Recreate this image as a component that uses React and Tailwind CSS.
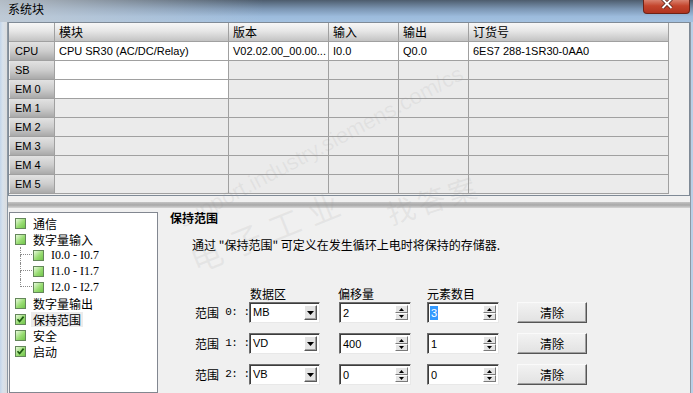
import React from "react";

const cjk = "font-['Noto_Sans_CJK_SC',sans-serif]";
const ui = "font-['Liberation_Sans','Noto_Sans_CJK_SC',sans-serif]";

function TreeBox({ checked }) {
  return (
    <div className="w-[11px] h-[11px] shrink-0 border border-[#64865a] bg-[linear-gradient(135deg,#e8fadc,#98dc72_55%,#72c54c)] flex items-center justify-center">
      {checked && (
        <svg width="9" height="9" viewBox="0 0 9 9">
          <path d="M1.5 4.2 L3.6 6.5 L7.6 1.6" stroke="#1d5a10" strokeWidth="1.7" fill="none" />
        </svg>
      )}
    </div>
  );
}

function TreeItem({ label, checked, selected }) {
  return (
    <div className="h-[16px] flex items-center pl-[5px]">
      <TreeBox checked={checked} />
      <span className={`ml-[5px] px-[2px] text-[12px] leading-[15px] text-black whitespace-nowrap ${cjk} ${selected ? "bg-[#ececec]" : ""}`}>{label}</span>
    </div>
  );
}

function SubItem({ label, last }) {
  return (
    <div className="h-[16px] flex items-center pl-[10px]">
      <div className="w-[12px] h-[16px] flex flex-col shrink-0">
        <div className="h-[8px] border-l border-b border-dotted border-[#8a8a8a]" />
        <div className={`h-[8px] ${last ? "" : "border-l border-dotted border-[#8a8a8a]"}`} />
      </div>
      <div className="ml-[1px]">
        <TreeBox />
      </div>
      <span className="ml-[7px] text-[12px] leading-[15px] text-black whitespace-nowrap font-['Liberation_Serif',serif]">{label}</span>
    </div>
  );
}

function Sunken({ className = "", children }) {
  return (
    <div className={`h-[21px] bg-white border border-t-[#6d6d6d] border-l-[#6d6d6d] border-b-[#e8e8e8] border-r-[#e8e8e8] shadow-[inset_1px_1px_0_#3c3c3c] flex items-center relative ${className}`}>
      {children}
    </div>
  );
}

function Combo({ value }) {
  return (
    <Sunken className="w-[71px] shrink-0">
      <span className={`pl-[3px] text-[11px] text-black ${ui}`}>{value}</span>
      <div className="ml-auto mr-[2px] w-[13px] h-[15px] bg-[#e4e4e4] border border-t-white border-l-white border-b-[#5a5a5a] border-r-[#5a5a5a] shadow-[inset_-1px_-1px_0_#a0a0a0] flex items-center justify-center">
        <svg width="7" height="4" viewBox="0 0 7 4">
          <path d="M0 0 H7 L3.5 4 Z" fill="#000" />
        </svg>
      </div>
    </Sunken>
  );
}

function Spin({ value, selected }) {
  return (
    <Sunken className="w-[72px] shrink-0">
      <span className={`ml-[2px] px-[1px] text-[11px] leading-[14px] ${ui} ${selected ? "bg-[#3399ff] text-white" : "text-black"}`}>{value}</span>
      <div className="ml-auto mr-[2px] w-[13px] h-[15px] flex flex-col">
        <div className="h-[8px] bg-[#e4e4e4] border border-t-white border-l-white border-b-[#7a7a7a] border-r-[#7a7a7a] flex items-center justify-center">
          <svg width="5" height="3" viewBox="0 0 5 3"><path d="M2.5 0 L5 3 H0 Z" fill="#000" /></svg>
        </div>
        <div className="h-[7px] bg-[#e4e4e4] border border-t-white border-l-white border-b-[#7a7a7a] border-r-[#7a7a7a] flex items-center justify-center">
          <svg width="5" height="3" viewBox="0 0 5 3"><path d="M0 0 H5 L2.5 3 Z" fill="#000" /></svg>
        </div>
      </div>
    </Sunken>
  );
}

function ClearBtn() {
  return (
    <div className={`w-[70px] h-[21px] bg-[linear-gradient(to_bottom,#f2f2f2,#e2e2e2)] border border-t-[#fafafa] border-l-[#fafafa] border-b-[#555] border-r-[#555] shadow-[inset_-1px_-1px_0_#a0a0a0] flex items-center justify-center text-[12px] text-black ${cjk}`}>
      清除
    </div>
  );
}

function RangeRow({ idx, area, offset, count, sel }) {
  return (
    <div className="flex items-center ml-[25px] h-[21px]">
      <div className="w-[54px] shrink-0 flex items-center text-black whitespace-nowrap">
        <span className={`text-[12px] ${cjk}`}>范围</span>
        <span className="text-[11px] tracking-[-0.5px] font-['Liberation_Mono',monospace] whitespace-pre"> {idx}: :</span>
      </div>
      <Combo value={area} />
      <div className="ml-[19px]">
        <Spin value={offset} />
      </div>
      <div className="ml-[16px]">
        <Spin value={count} selected={sel} />
      </div>
      <div className="ml-[18px]">
        <ClearBtn />
      </div>
    </div>
  );
}

const headers = ["", "模块", "版本", "输入", "输出", "订货号"];
const rows = [
  { h: "CPU", cells: ["CPU SR30 (AC/DC/Relay)", "V02.02.00_00.00...", "I0.0", "Q0.0", "6ES7 288-1SR30-0AA0"], white: [1, 1, 1, 1, 1] },
  { h: "SB", cells: ["", "", "", "", ""], white: [1, 0, 0, 0, 0] },
  { h: "EM 0", cells: ["", "", "", "", ""], white: [1, 0, 0, 0, 0] },
  { h: "EM 1", cells: ["", "", "", "", ""], white: [0, 0, 0, 0, 0] },
  { h: "EM 2", cells: ["", "", "", "", ""], white: [0, 0, 0, 0, 0] },
  { h: "EM 3", cells: ["", "", "", "", ""], white: [0, 0, 0, 0, 0] },
  { h: "EM 4", cells: ["", "", "", "", ""], white: [0, 0, 0, 0, 0] },
  { h: "EM 5", cells: ["", "", "", "", ""], white: [0, 0, 0, 0, 0] },
];

function Table() {
  return (
    <div className="h-[174px] border border-[#7f8a96] flex bg-[#f0f0f0]">
      <div className="grid grid-cols-[46px_174px_100px_70px_70px_200px] auto-rows-[19px] content-start">
        {headers.map((t, i) => (
          <div
            key={"h" + i}
            className={`border-r border-b border-[#a0a0a0] bg-[linear-gradient(to_bottom,#f7f7f7,#e6e6e6_45%,#c3c3c3)] flex items-center pl-[4px] text-[12px] text-black ${cjk}`}
          >
            {t}
          </div>
        ))}
        {rows.map((r) => (
          <React.Fragment key={r.h}>
            <div className={`border-r border-b border-[#a0a0a0] bg-[linear-gradient(to_bottom,#e2e2e2,#cdcdcd_50%,#a9a9a9)] shadow-[inset_1px_0_0_#efefef] flex items-center pl-[6px] text-[11px] text-black ${ui}`}>
              {r.h}
            </div>
            {r.cells.map((c, j) => (
              <div
                key={j}
                className={`border-r border-b border-[#a0a0a0] flex items-center pl-[4px] text-[11px] text-black whitespace-nowrap overflow-hidden ${ui} ${r.white[j] ? "bg-white" : "bg-[#ebebeb]"}`}
              >
                {c}
              </div>
            ))}
          </React.Fragment>
        ))}
      </div>
      <div className="flex-1" />
    </div>
  );
}

export default function App() {
  return (
    <div className={`w-[693px] h-[393px] overflow-hidden relative bg-[#f0f0f0] flex flex-col ${ui}`}>
      {/* title bar */}
      <div className="h-[22px] shrink-0 flex items-start bg-[linear-gradient(to_right,rgba(196,204,212,0.85),rgba(196,204,212,0)_38%),linear-gradient(to_bottom,#4d5c6d,#7b95b2_40%,#9cbbdc_75%,#a3c1e0)]">
        <span className={`ml-[8px] mt-[1px] text-[12px] leading-[16px] text-black ${cjk}`}>系统块</span>
        <div className="ml-auto mr-[3px] w-[47px] h-[14px] rounded-b-[4px] border border-t-0 border-[#6e2216] bg-[linear-gradient(to_bottom,#d9826f,#c4452d_45%,#b0331f)] flex items-start justify-center">
          <svg width="12" height="9" viewBox="0 0 12 9">
            <path d="M1.5 -1 L10.5 8 M10.5 -1 L1.5 8" stroke="#4a1a12" strokeWidth="3.4" />
            <path d="M1.5 -1 L10.5 8 M10.5 -1 L1.5 8" stroke="#ffffff" strokeWidth="2" />
          </svg>
        </div>
      </div>

      <div className="flex-1 flex min-h-0">
        {/* left frame */}
        <div className="w-[8px] shrink-0 bg-[linear-gradient(to_right,#c3d5e9,#d8e2ec_40%,#dcdcdc)] border-r border-[#8c98a4]" />

        {/* main */}
        <div className="w-[682px] flex flex-col min-h-0">
          <Table />
          <div className="h-[6px] shrink-0" />
          <div className="h-[6px] shrink-0 bg-[linear-gradient(to_bottom,#c4c4c4,#a8a8a8_50%,#d6d6d6)]" />

          <div className="flex-1 flex min-h-0">
            {/* tree */}
            <div className="w-[149px] shrink-0 mt-[4px] ml-[1px] bg-white border border-[#828790] pt-[2px] flex flex-col">
              <TreeItem label="通信" />
              <TreeItem label="数字量输入" />
              <SubItem label="I0.0 - I0.7" />
              <SubItem label="I1.0 - I1.7" />
              <SubItem label="I2.0 - I2.7" last />
              <TreeItem label="数字量输出" />
              <TreeItem label="保持范围" checked selected />
              <TreeItem label="安全" />
              <TreeItem label="启动" checked />
            </div>

            {/* content */}
            <div className="flex-1 pl-[12px] flex flex-col">
              <div className={`mt-[3px] h-[14px] leading-[14px] text-[12px] font-bold text-black ${cjk}`}>保持范围</div>
              <div className={`mt-[13px] ml-[22px] h-[14px] leading-[14px] text-[12px] text-black whitespace-nowrap ${cjk}`}>
                通过 "保持范围" 可定义在发生循环上电时将保持的存储器.
              </div>
              <div className={`mt-[35px] h-[14px] leading-[14px] flex text-[12px] text-black whitespace-nowrap ${cjk}`}>
                <span className="ml-[80px] w-[88px]">数据区</span>
                <span className="w-[89px]">偏移量</span>
                <span>元素数目</span>
              </div>
              <div className="mt-[1px] flex flex-col gap-[10px]">
                <RangeRow idx="0" area="MB" offset="2" count="3" sel />
                <RangeRow idx="1" area="VD" offset="400" count="1" />
                <RangeRow idx="2" area="VB" offset="0" count="0" />
              </div>
            </div>
          </div>
        </div>

        {/* right frame */}
        <div className="w-[3px] shrink-0 bg-[#b9cfe6] border-l border-[#8c98a4]" />
      </div>

      {/* watermark overlay */}
      <div className="pointer-events-none absolute inset-0 overflow-hidden">
        <div className={`absolute left-[185px] top-[205px] -rotate-[22deg] text-[32px] tracking-[10px] text-[rgba(150,150,150,0.12)] ${cjk}`}>电子工业</div>
        <div className="absolute left-[180px] top-[205px] -rotate-[28deg] origin-left text-[22px] text-[rgba(150,150,150,0.12)] font-['Liberation_Sans',sans-serif] whitespace-nowrap">support.industry.siemens.com/cs</div>
        <div className={`absolute left-[385px] top-[178px] -rotate-[18deg] text-[28px] tracking-[4px] text-[rgba(150,150,150,0.14)] ${cjk}`}>找答案</div>
      </div>
    </div>
  );
}
